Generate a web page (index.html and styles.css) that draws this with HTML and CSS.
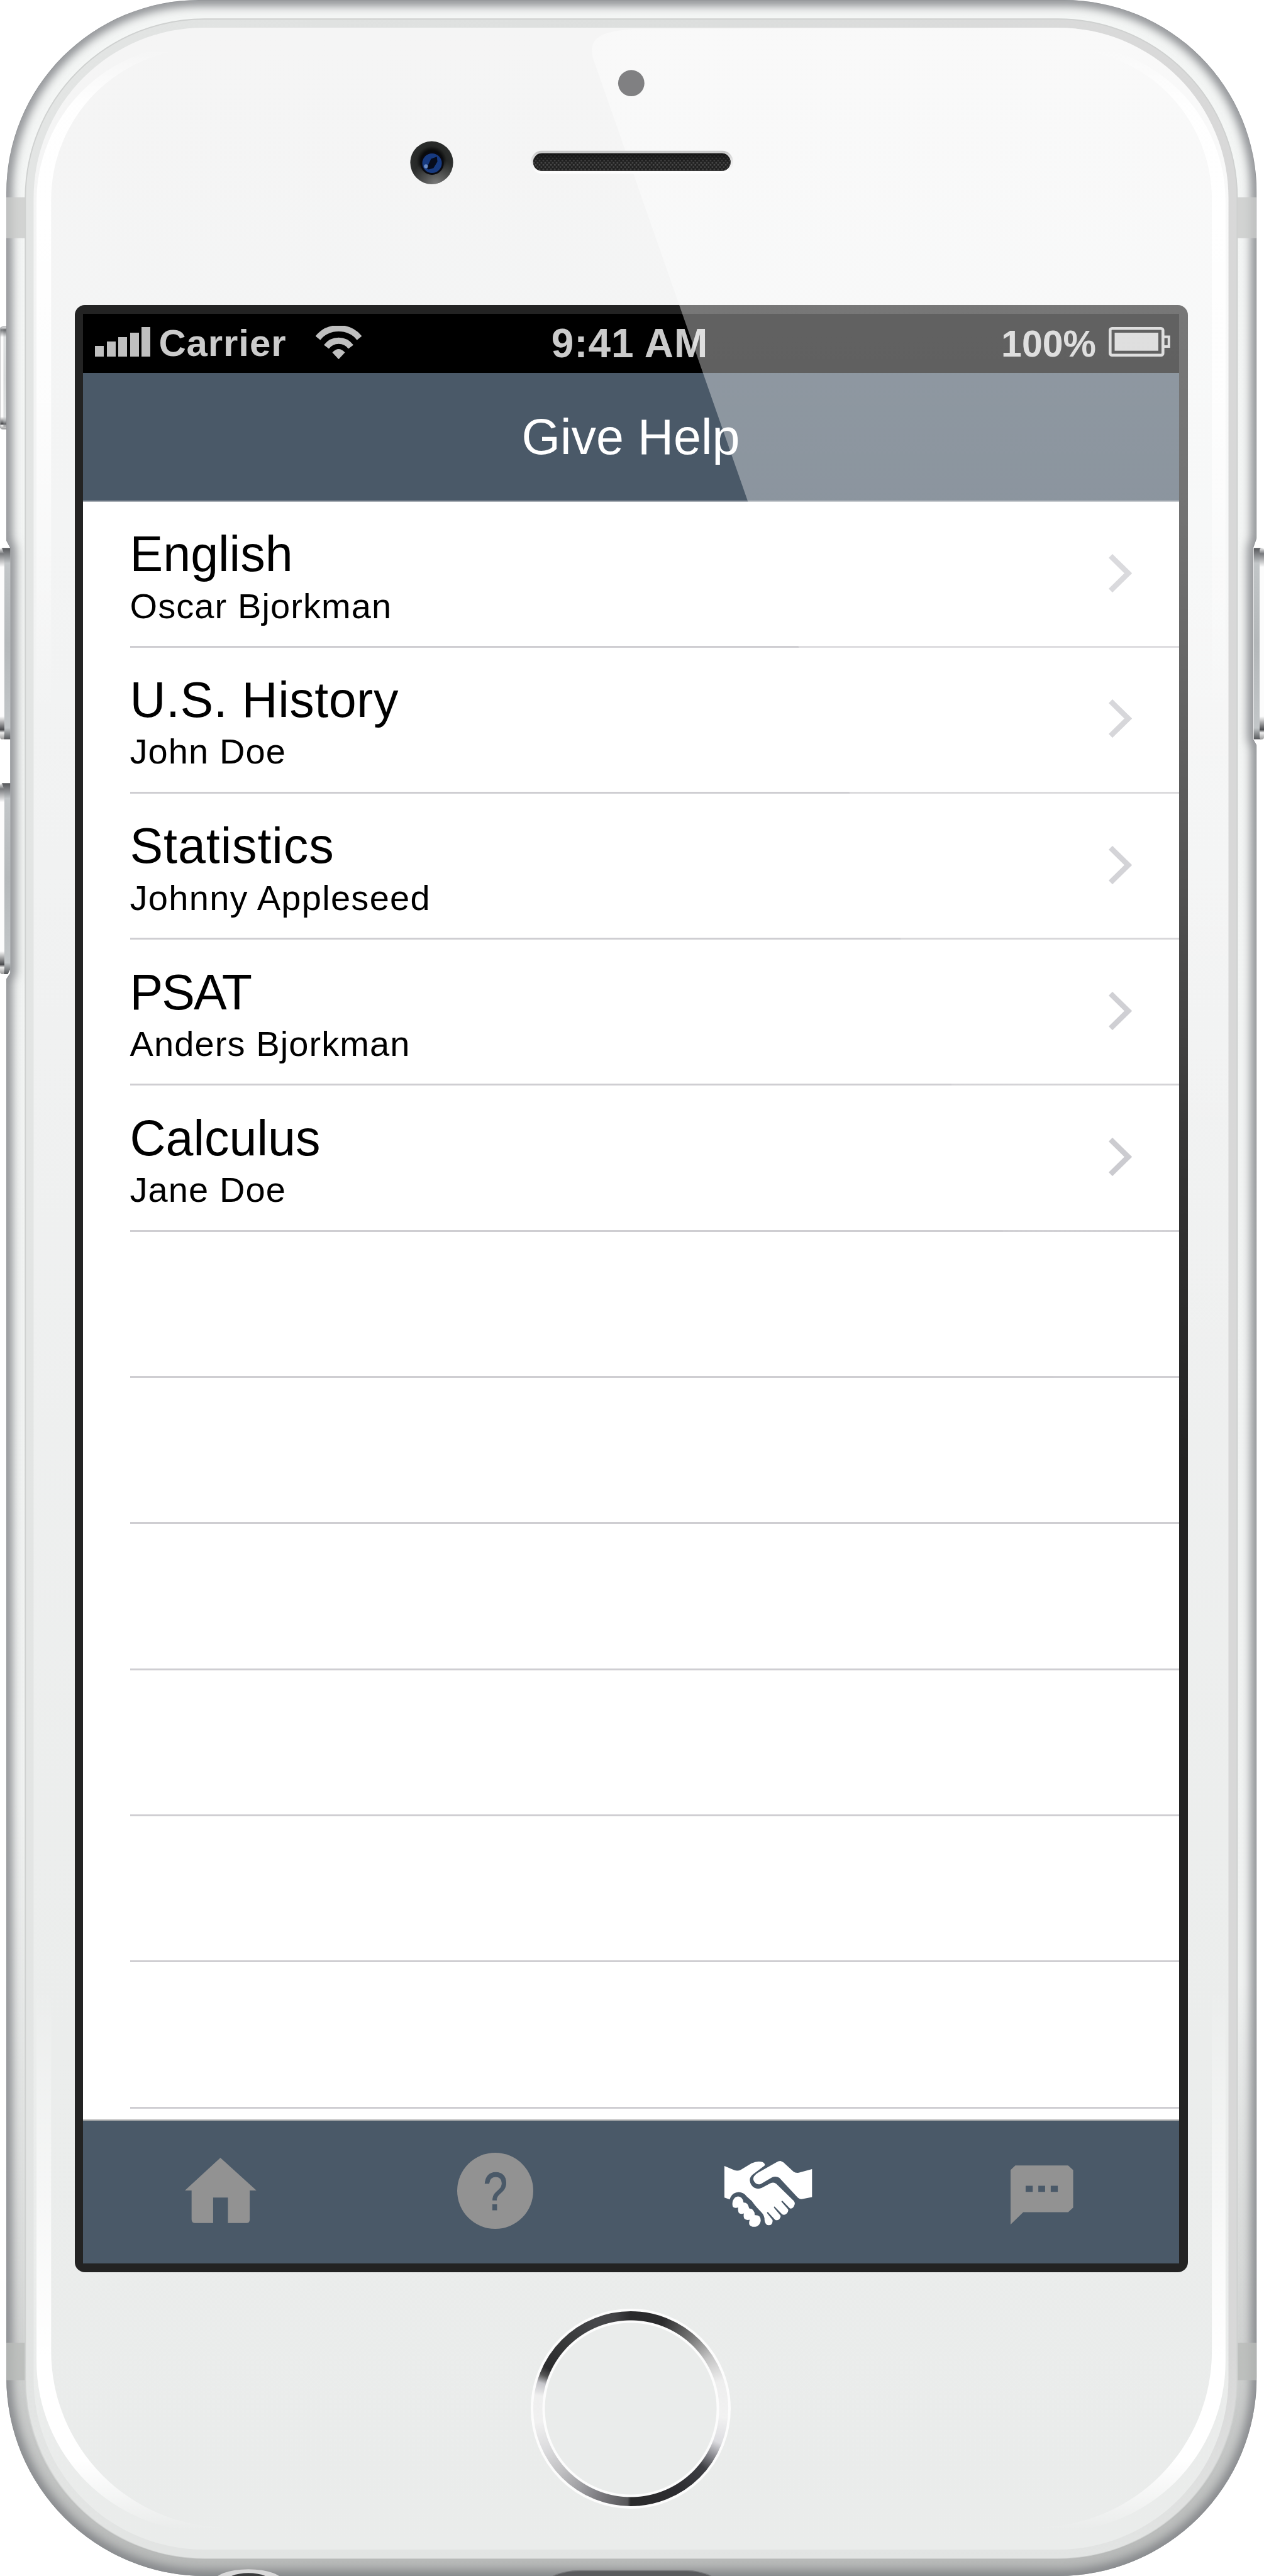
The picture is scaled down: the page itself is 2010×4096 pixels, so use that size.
FILE: index.html
```html
<!DOCTYPE html>
<html lang="en">
<head>
<meta charset="utf-8">
<title>Give Help</title>
<link rel="stylesheet" href="styles.css">
</head>
<body>
<div class="phone">
  <svg class="shell" viewBox="0 0 2595 5289" preserveAspectRatio="none" aria-hidden="true">
    <defs>
      <linearGradient id="metal" x1="0" y1="0" x2="0" y2="1">
        <stop offset="0" stop-color="#f4f6f5"/><stop offset=".7" stop-color="#f0f2f1"/>
        <stop offset=".88" stop-color="#d9dbda"/><stop offset="1" stop-color="#b6b8b7"/>
      </linearGradient>
      <linearGradient id="metalRight" x1="0" y1="0" x2="0" y2="1">
        <stop offset="0" stop-color="#f4f6f5" stop-opacity="0"/><stop offset=".2" stop-color="#f4f6f5"/>
        <stop offset=".82" stop-color="#f1f3f2"/><stop offset="1" stop-color="#c8cac9" stop-opacity="0"/>
      </linearGradient>
      <linearGradient id="rim" x1="0" y1="0" x2="1" y2="0">
        <stop offset="0" stop-color="#e3e5e4"/><stop offset=".5" stop-color="#dddfde"/><stop offset="1" stop-color="#d8d8d8"/>
      </linearGradient>
      <linearGradient id="rimLow" x1="0" y1="0" x2="0" y2="1">
        <stop offset=".92" stop-color="#e2e4e3" stop-opacity="0"/><stop offset="1" stop-color="#e2e4e3"/>
      </linearGradient>
      <linearGradient id="glass" x1="0" y1="0" x2="0" y2="1">
        <stop offset="0" stop-color="#f5f5f5"/><stop offset=".2" stop-color="#f3f4f4"/>
        <stop offset=".4" stop-color="#f0f1f1"/><stop offset=".8" stop-color="#ebedec"/><stop offset="1" stop-color="#eaeceb"/>
      </linearGradient>
      <linearGradient id="shine" gradientUnits="userSpaceOnUse" x1="0" y1="100" x2="0" y2="5195">
        <stop offset="0" stop-color="#fff" stop-opacity="0"/><stop offset=".022" stop-color="#fff" stop-opacity=".95"/>
        <stop offset=".07" stop-color="#fff"/><stop offset=".15" stop-color="#fff" stop-opacity=".75"/>
        <stop offset=".27" stop-color="#fff" stop-opacity="0"/><stop offset=".78" stop-color="#fff" stop-opacity="0"/>
        <stop offset=".87" stop-color="#fff" stop-opacity=".6"/><stop offset=".93" stop-color="#fff"/>
        <stop offset=".972" stop-color="#fff"/><stop offset="1" stop-color="#fff" stop-opacity="0"/>
      </linearGradient>
      <linearGradient id="keyEnds" x1="0" y1="0" x2="0" y2="1">
        <stop offset="0" stop-color="#55575a"/><stop offset=".03" stop-color="#7d7f82"/><stop offset=".08" stop-color="#c2c6c8"/>
        <stop offset=".5" stop-color="#b4b8ba"/><stop offset=".94" stop-color="#c2c6c8"/><stop offset="1" stop-color="#55575a"/>
      </linearGradient>
      <linearGradient id="keyFace" x1="0" y1="0" x2="0" y2="1">
        <stop offset="0" stop-color="#eee"/><stop offset=".03" stop-color="#77797c"/><stop offset=".1" stop-color="#fcfcfc"/>
        <stop offset=".88" stop-color="#fcfcfc"/><stop offset=".95" stop-color="#48494c"/><stop offset=".965" stop-color="#eee"/><stop offset="1" stop-color="#999"/>
      </linearGradient>
      <filter id="soft" x="-10%" y="-10%" width="120%" height="120%"><feGaussianBlur stdDeviation="10"/></filter>
      <path id="bodyShape" d="M408 0H2184A396 396 0 0 1 2580 396V1105L2573 1125V1518L2580 1530V4881A408 408 0 0 1 2172 5289H421A408 408 0 0 1 13 4881V2010L21 1998V1125L13 1110V396A396 396 0 0 1 408 0Z"/>
      <clipPath id="bodyClip"><use href="#bodyShape"/></clipPath>
    </defs>

    <!-- mute switch -->
    <rect x="0" y="671" width="20" height="210" rx="6" fill="url(#keyFace)" stroke="#a5a7aa" stroke-width="1.5"/>
    <rect x="7" y="676" width="8" height="200" fill="url(#keyEnds)" opacity=".5"/>

    <use href="#bodyShape" fill="url(#metal)"/>
    <g clip-path="url(#bodyClip)">
      <rect x="2540" y="400" width="40" height="4480" fill="url(#metalRight)"/>
      <use href="#bodyShape" fill="none" stroke="#7c7e82" stroke-width="21" filter="url(#soft)"/>
      <use href="#bodyShape" fill="none" stroke="#808286" stroke-width="2" opacity=".4"/>
      <rect x="12" y="405" width="40" height="84" fill="#c9cbc9" opacity=".8"/>
      <rect x="2540" y="405" width="40" height="84" fill="#c9cbc9" opacity=".8"/>
      <rect x="12" y="4810" width="40" height="77" fill="#b9bbb9" opacity=".8"/>
      <rect x="2540" y="4810" width="40" height="77" fill="#b9bbb9" opacity=".8"/>
      <ellipse cx="510" cy="5302" rx="72" ry="27" fill="#d9d9da"/>
      <ellipse cx="510" cy="5302" rx="48" ry="19" fill="#3a3b3d"/>
      <path d="M1135 5289Q1160 5278 1190 5278H1410Q1435 5278 1460 5289" fill="#5a5b5e" stroke="#77787b" stroke-width="2"/>
    </g>

    <!-- volume and power keys -->
    <rect x="0" y="1125" width="10" height="393" rx="5" fill="url(#keyFace)"/>
    <path d="M4 1125H21V1518H8L9 1505V1140Z" fill="url(#keyEnds)"/>
    <rect x="0" y="1608" width="10" height="392" rx="5" fill="url(#keyFace)"/>
    <path d="M4 1608H21V1990L16 2000H8L9 1988V1622Z" fill="url(#keyEnds)"/>
    <path d="M2574 1125H2590L2586 1140V1505L2590 1518H2574Z" fill="url(#keyEnds)"/>
    <rect x="2586" y="1125" width="9" height="393" rx="5" fill="url(#keyFace)"/>

    <rect x="52" y="39" width="2488" height="5213.500" rx="368" fill="url(#rim)" stroke="#cfd1d0" stroke-width="2.500"/>
    <rect x="52" y="39" width="2488" height="5213.500" rx="368" fill="url(#rimLow)"/>
    <rect x="69" y="56.700" width="2453" height="5178" rx="350" fill="url(#glass)"/>
    <path fill="url(#shine)" fill-rule="evenodd" d="M397 92H2194A322 322 0 0 1 2516 414V4848A350 350 0 0 1 2166 5198H425A350 350 0 0 1 75 4848V414A322 322 0 0 1 397 92ZM415 100A310 310 0 0 0 105 410V4827A362 362 0 0 0 467 5189H2126A362 362 0 0 0 2488 4827V410A310 310 0 0 0 2178 100Z"/>
  </svg>

  <main class="screen">
    <div class="status">
      <div class="status-left">
        <div class="signal"><i></i><i></i><i></i><i></i><i></i></div>
        <span class="carrier">Carrier</span>
        <svg class="wifi" viewBox="0 0 73 53.200">
          <g fill="none" stroke="#bfbfbf">
            <path d="M3.500 19.500C20-1 53-1 69.500 19.500" stroke-width="10"/>
            <path d="M17 33.500C27 20.500 46 20.500 56 33.500" stroke-width="10"/>
          </g>
          <path d="M36.500 53.200L26.500 42.500Q36.500 31.500 46.500 42.500Z" fill="#bfbfbf"/>
        </svg>
      </div>
      <span class="clock">9:41 AM</span>
      <div class="status-right">
        <span class="percent">100%</span>
        <svg class="battery" viewBox="0 0 98 47">
          <rect x="2.300" y="2.300" width="84" height="42.400" rx="3" fill="none" stroke="#cbcbcb" stroke-width="4.600"/>
          <rect x="9.500" y="9" width="69.500" height="28.700" fill="#cbcbcb"/>
          <path d="M88 15.500H95.800V31H88" fill="none" stroke="#cbcbcb" stroke-width="4"/>
        </svg>
      </div>
    </div>
    <header class="nav"><h1>Give Help</h1></header>
    <ul class="list">
      <li><div><strong>English</strong><span>Oscar Bjorkman</span></div><svg class="chev" viewBox="0 0 37 61"><path d="M3 3L31 30.500L3 58"/></svg></li>
      <li><div><strong class="wide">U.S. History</strong><span>John Doe</span></div><svg class="chev" viewBox="0 0 37 61"><path d="M3 3L31 30.500L3 58"/></svg></li>
      <li><div><strong class="wider">Statistics</strong><span class="wide">Johnny Appleseed</span></div><svg class="chev" viewBox="0 0 37 61"><path d="M3 3L31 30.500L3 58"/></svg></li>
      <li><div><strong class="tight">PSAT</strong><span>Anders Bjorkman</span></div><svg class="chev" viewBox="0 0 37 61"><path d="M3 3L31 30.500L3 58"/></svg></li>
      <li><div><strong>Calculus</strong><span>Jane Doe</span></div><svg class="chev" viewBox="0 0 37 61"><path d="M3 3L31 30.500L3 58"/></svg></li>
      <li></li><li></li><li></li><li></li><li></li><li></li>
    </ul>
    <nav class="tabs">
      <a><svg class="home" viewBox="139 300 256 406" preserveAspectRatio="none"><path fill="#929292" d="M266 300L395 501H371V680Q371 702 361 702H293V545H240V702H174Q163 702 163 680V501H139Z"/></svg></a>
      <a><svg class="help" viewBox="0 0 156 156"><circle cx="78" cy="78" r="78" fill="#929292"/><text class="mark" transform="translate(78.500 117) scale(.82 1)" text-anchor="middle">?</text></svg></a>
      <a><svg class="hands" viewBox="226 409 302 410" preserveAspectRatio="none">
        <g fill="#fff">
          <path d="M228 440L262 466Q273 473 284 463L320 424Q340 406 357 416Q368 428 364 438L330 485Q314 504 314 528Q316 560 330 575Q342 586 355 575L384 547Q395 538 404 550L463 655Q469 667 465 682Q461 704 450 702L425 655Q420 654 422 662L443 705Q447 716 440 732Q433 746 424 738L398 690Q394 690 397 700L418 745Q420 757 414 768Q406 780 399 770L376 725Q371 722 373 732L391 772Q393 790 386 802Q377 810 369 798Q363 786 364 766Q362 740 354 727L340 700Q330 680 321 656L303 627Q294 604 277 601Q257 603 249 632L246 646L228 635Z"/>
          <path d="M418 409L428 418L462 475Q468 484 480 482L525 459V632L490 644Q481 644 476 634L414 513Q402 500 390 510L352 550Q342 558 334 547Q322 528 328 505Q334 490 342 482L404 418Q412 409 418 409Z"/>
          <path d="M264 635Q275 620 286 637Q292 648 293 666Q308 664 312 702Q330 704 331 743Q352 740 351 779Q349 802 337 813Q321 820 313 803Q310 789 314 771Q302 777 295 764Q292 750 294 733Q281 741 276 727Q273 710 275 696Q260 703 256 688Q252 656 264 635Z"/>
        </g></svg></a>
      <a><svg class="chat" viewBox="1197 436 213 366" preserveAspectRatio="none"><path fill="#929292" fill-rule="evenodd" d="M1213 437H1392L1409 465V697L1392 725H1240L1197 801V465ZM1248 562V600H1272V562ZM1291 562V600H1314V562ZM1333 562V600H1357V562Z"/></svg></a>
    </nav>
  </main>

  <div class="home-button"></div>

  <svg class="front" viewBox="0 0 2595 5289" preserveAspectRatio="none" aria-hidden="true">
    <defs>
      <linearGradient id="fade" gradientUnits="userSpaceOnUse" x1="0" y1="60" x2="0" y2="3010">
        <stop offset="0" stop-color="#fff" stop-opacity=".39"/><stop offset=".22" stop-color="#fff" stop-opacity=".38"/>
        <stop offset=".34" stop-color="#fff" stop-opacity=".36"/><stop offset=".55" stop-color="#fff" stop-opacity=".245"/>
        <stop offset=".8" stop-color="#fff" stop-opacity=".07"/><stop offset="1" stop-color="#fff" stop-opacity="0"/>
      </linearGradient>
      <radialGradient id="cam" cx=".5" cy=".46" r=".56">
        <stop offset="0" stop-color="#060608"/><stop offset=".45" stop-color="#0b0c0d"/><stop offset=".62" stop-color="#262827"/><stop offset="1" stop-color="#303231"/>
      </radialGradient>
      <radialGradient id="camLow" cx=".6" cy="1" r=".6">
        <stop offset="0" stop-color="#8a8a8a" stop-opacity=".85"/><stop offset="1" stop-color="#777" stop-opacity="0"/>
      </radialGradient>
      <pattern id="mesh" width="7.8" height="9" patternUnits="userSpaceOnUse" x="1094" y="314">
        <circle cx="2" cy="2.2" r="1.8" fill="#505050"/><circle cx="5.900" cy="6.700" r="1.8" fill="#505050"/>
      </pattern>
      <linearGradient id="meshShade" x1="0" y1="0" x2="0" y2="1">
        <stop offset="0" stop-color="#111" stop-opacity=".85"/><stop offset=".6" stop-color="#111" stop-opacity="0"/>
        <stop offset="1" stop-color="#111" stop-opacity=".3"/>
      </linearGradient>
      <linearGradient id="slot" x1="0" y1="0" x2="0" y2="1">
        <stop offset="0" stop-color="#c4c4c4"/><stop offset=".5" stop-color="#ececec"/><stop offset="1" stop-color="#fff"/>
      </linearGradient>
    </defs>
    <path fill="url(#fade)" d="M1300 60C1230 64 1208 80 1217 118L2227 3010H2522V407A350 350 0 0 0 2172 57Z"/>
    <circle cx="1296" cy="170.700" r="27" fill="#808082"/>
    <circle cx="886.300" cy="334" r="44" fill="url(#cam)"/>
    <circle cx="886.300" cy="334" r="44" fill="url(#camLow)"/>
    <circle cx="887" cy="335" r="24" fill="#0a0a10"/>
    <circle cx="887" cy="335" r="20" fill="#173a80"/>
    <path d="M876 345L885 326L897 322L898 332L890 345L880 348Z" fill="#070c1c"/>
    <circle cx="874.500" cy="341.500" r="4" fill="#6c8cc4"/>
    <rect x="1090" y="309.500" width="415" height="47" rx="22" fill="url(#slot)"/>
    <rect x="1094.400" y="314.800" width="405.600" height="36.200" rx="18.100" fill="#232323"/>
    <rect x="1094.400" y="314.800" width="405.600" height="36.200" rx="18.100" fill="url(#mesh)"/>
    <rect x="1094.400" y="314.800" width="405.600" height="36.200" rx="18.100" fill="url(#meshShade)"/>
  </svg>
</div>
</body>
</html>
```
FILE: styles.css
```css
* { box-sizing: border-box; }
body {
  margin: 0;
  background: #fff;
  font-family: "Liberation Sans", Arial, Helvetica, sans-serif;
}
.phone {
  position: relative;
  width: 2010px;
  height: 4096px;
  padding: 485px 121px 0 119px;
  overflow: hidden;
}
.shell, .front {
  position: absolute;
  top: 0;
  left: 0;
  width: 2010px;
  height: 4096px;
}
.front { pointer-events: none; }
.screen {
  position: relative;
  display: flex;
  flex-direction: column;
  height: 3128px;
  border: solid #232323;
  border-width: 14px 14px 14px 13px;
  border-radius: 16px;
  background: #fff;
}
.status {
  display: grid;
  grid-template-columns: 1fr auto 1fr;
  flex: none;
  height: 94px;
  padding: 0 13px 0 19px;
  background: #000;
  color: #cbcbcb;
  font-weight: bold;
  line-height: 70px;
}
.status-left, .status-right { display: flex; align-items: flex-start; }
.status-right { justify-content: flex-end; }
.signal {
  display: flex;
  align-items: flex-end;
  gap: 4.6px;
  height: 46.6px;
  margin-top: 21px;
}
.signal i { width: 14px; height: 16.3px; background: #bfbfbf; }
.signal i:nth-child(2) { height: 23.4px; }
.signal i:nth-child(3) { height: 30.3px; }
.signal i:nth-child(4) { height: 37.2px; }
.signal i:nth-child(5) { height: 46.6px; }
.carrier { margin: 12px 0 0 13px; font-size: 60px; letter-spacing: .9px; }
.wifi { width: 73px; height: 53.2px; margin: 19px 0 0 47px; }
.clock { margin: 12px 5px 0 -5px; font-size: 64px; letter-spacing: .9px; }
.percent { margin-top: 13px; font-size: 59px; }
.battery { width: 98px; height: 47px; margin: 21px 1px 0 20px; }
.nav {
  flex: none;
  display: flex;
  justify-content: center;
  align-items: center;
  height: 205px;
  padding: 1px 1px 0 0;
  border-bottom: 2px solid #a7adb4;
  background: #4a5968;
}
h1 {
  margin: 0;
  color: #fff;
  font-size: 79px;
  font-weight: normal;
  line-height: 90px;
}
.list {
  flex: 1;
  min-height: 0;
  margin: 0;
  padding: 0 0 0 74.5px;
  overflow: hidden;
  list-style: none;
}
.list li {
  display: flex;
  justify-content: space-between;
  height: 232.33px;
  padding: 38.4px 75px 0 0;
  border-bottom: 3px solid #cfced2;
}
.list li:first-child { height: 231.5px; }
.list strong, .list span { display: block; white-space: nowrap; }
.list strong { font-size: 79px; font-weight: normal; line-height: 90px; }
.list span { margin-top: 6.3px; font-size: 56px; line-height: 62px; letter-spacing: 1.1px; }
.list strong.wide { letter-spacing: .5px; }
.list strong.wider { letter-spacing: .9px; }
.list strong.tight { letter-spacing: -2px; }
.list span.wide { letter-spacing: 1.3px; }
.chev { width: 37px; height: 61px; margin-top: 44.5px; }
.chev path { fill: none; stroke: #c7c7cc; stroke-width: 8.6; }
.tabs {
  flex: none;
  display: grid;
  grid-template-columns: repeat(4, 1fr);
  height: 229px;
  border-top: 2px solid #b2b2b2;
  background: #4a5968;
}
.tabs a { display: flex; justify-content: center; align-items: center; }
.home { width: 113.8px; height: 104.8px; margin: 0 0 4px 2px; }
.help { width: 121px; height: 121px; margin: 0 0 5px 3px; }
.mark { fill: #4a5968; stroke: #4a5968; stroke-width: 1.5; font-size: 109px; }
.hands { width: 141.7px; height: 105.8px; margin-top: 6px; }
.chat { width: 100px; height: 94.4px; margin: 9px 1px 0 0; }
.home-button {
  position: relative;
  width: 318px;
  height: 318px;
  margin: 58px 0 0 725px;
  border: 4px solid #fcfcfc;
  border-radius: 50%;
  background:
    radial-gradient(circle closest-side, #eaeceb 0 136px, #fcfcfc 137px 140px, transparent 141px),
    conic-gradient(#2a2a2c 0deg, #2c2c2d 20deg, #757575 40deg, #c4c4c4 57deg, #eee 73deg, #f2f2f2 95deg, #dcdce0 111deg, #8a8a90 120deg, #3e3f44 129deg, #2c2c30 150deg, #2a2a2b 180deg, #58585a 182deg, #7c7b80 200deg, #9c9ca0 212deg, #c0c0c2 228deg, #dcdcde 245deg, #f0f0f0 262deg, #efefef 278deg, #c4c4c9 286deg, #555 291deg, #2a2a2c 296deg, #38393a 315deg, #46474a 338deg, #434346 350deg, #2a2a2c 360deg);
}
```
